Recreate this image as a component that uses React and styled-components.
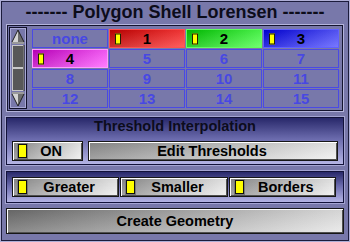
import React from 'react';
import styled, { createGlobalStyle } from 'styled-components';

const GlobalStyle = createGlobalStyle`
  html, body {
    margin: 0;
    padding: 0;
    background: #7878aa;
  }
  * {
    box-sizing: border-box;
  }
`;

const cells = [
  { label: 'none' },
  { label: '1', color: ['#c00000', '#ff3a3a'], edge: '#ff5050' },
  { label: '2', color: ['#00c000', '#50ff50'], edge: '#60ff60' },
  { label: '3', color: ['#0000d8', '#5a5aff'], edge: '#6060ff' },
  { label: '4', color: ['#c000c0', '#ff60ff'], edge: '#ff9cff' },
  { label: '5' },
  { label: '6' },
  { label: '7' },
  { label: '8' },
  { label: '9' },
  { label: '10' },
  { label: '11' },
  { label: '12' },
  { label: '13' },
  { label: '14' },
  { label: '15' }
];

const ScrollArrow = ({ down }) => (
  <g transform={down ? 'translate(0 80) scale(1 -1)' : undefined}>
    <polygon points="2,14 8,2 8,14" fill="#d4d4d4" />
    <polygon points="8,2 14,14 8,14" fill="#6c6c6c" />
    <polyline points="2,14 8,2 14,14" fill="none" stroke="#202020" strokeWidth="1" />
    <rect x="2" y="14" width="12" height="2" fill="#9a9a9a" />
  </g>
);

const ScrollGlyph = () => (
  <svg width="16" height="80" viewBox="0 0 16 80">
    <ScrollArrow />
    <rect x="2.5" y="17.5" width="11" height="22" fill="#585858" stroke="#c8c8c8" />
    <rect x="2.5" y="40.5" width="11" height="22" fill="#585858" stroke="#c8c8c8" />
    <line x1="14" y1="17" x2="14" y2="63" stroke="#202020" />
    <ScrollArrow down />
  </svg>
);

const App = () => (
  <>
    <GlobalStyle />
    <Window>
      <Title>------- Polygon Shell Lorensen -------</Title>

      <ListPanel>
        <Scrollbar>
          <ScrollGlyph />
        </Scrollbar>
        <CellGrid>
          {cells.map(cell => (
            <Cell key={cell.label} color={cell.color} edge={cell.edge}>
              {cell.color && <CellMark />}
              {cell.label}
            </Cell>
          ))}
        </CellGrid>
      </ListPanel>

      <ShadedPanel>
        <PanelTitle>Threshold Interpolation</PanelTitle>
        <ButtonRow columns="71px 1fr" gap="5px">
          <Button>
            <Mark />
            <Label>ON</Label>
          </Button>
          <Button>
            <Label>Edit Thresholds</Label>
          </Button>
        </ButtonRow>
      </ShadedPanel>

      <ShadedPanel compact>
        <ButtonRow columns="repeat(3, 1fr)" gap="1px">
          <Button>
            <Mark />
            <Label>Greater</Label>
          </Button>
          <Button>
            <Mark />
            <Label>Smaller</Label>
          </Button>
          <Button>
            <Mark />
            <Label>Borders</Label>
          </Button>
        </ButtonRow>
      </ShadedPanel>

      <BigButton>Create Geometry</BigButton>
    </Window>
  </>
);

export default App;

const Window = styled.div`
  width: 350px;
  height: 242px;
  padding: 0 5px;
  display: flex;
  flex-direction: column;

  background: #7878aa;
  border: 1px solid #aeaed6;
  box-shadow: inset 0 0 0 1px #1c1c3c;

  font-family: 'Liberation Sans', Arial, sans-serif;
  font-weight: bold;
`;

const Title = styled.div`
  height: 23px;
  line-height: 23px;
  text-align: center;
  font-size: 18px;
  color: #0c0c1a;
  white-space: nowrap;
`;

const ListPanel = styled.div`
  display: flex;
  gap: 5px;
  height: 88px;
  padding: 2px;

  border: 1px solid #b4b4dc;
  box-shadow: inset 0 0 0 1px #14142e;
`;

const Scrollbar = styled.div`
  width: 18px;
  height: 82px;
  border: 1px solid #10102a;
  box-shadow: inset 0 0 0 1px #a8a8d4;
  line-height: 0;
`;

const CellGrid = styled.div`
  display: grid;
  grid-template-columns: repeat(4, 76px);
  grid-auto-rows: 19px;
  gap: 1px;
  margin-top: 2px;
`;

const Cell = styled.div`
  position: relative;
  display: flex;
  align-items: center;
  justify-content: center;

  border: 1px solid ${({ edge }) => edge || '#4a4ae4'};
  background: ${({ color }) =>
    color
      ? `linear-gradient(to bottom, rgba(0,0,0,0.06), rgba(255,255,255,0.18)), linear-gradient(100deg, ${color[0]}, ${color[1]})`
      : 'transparent'};

  font-size: 15px;
  color: ${({ color }) => (color ? '#000000' : '#4848e2')};
`;

const CellMark = styled.span`
  position: absolute;
  left: 5px;
  top: 50%;
  transform: translateY(-50%);
  width: 6px;
  height: 11px;
  background: #ffff00;
  border: 1px solid #202000;
`;

const ShadedPanel = styled.div`
  display: flex;
  flex-direction: column;
  margin-top: ${({ compact }) => (compact ? '6px' : '5px')};
  padding: ${({ compact }) => (compact ? '5px 7px 5px 5px' : '0 5px 3px')};

  border: 1px solid #12123a;
  box-shadow: 0 0 0 1px #a4a4d2;
  background: linear-gradient(to bottom, #28286a 0%, #6a6aac 45%, #b4b4e4 100%);
`;

const PanelTitle = styled.div`
  height: 17px;
  line-height: 17px;
  margin-bottom: 6px;
  text-align: center;
  font-size: 14.5px;
  color: #0c0c1c;
`;

const ButtonRow = styled.div`
  display: grid;
  grid-template-columns: ${({ columns }) => columns};
  gap: ${({ gap }) => gap};
`;

const Button = styled.div`
  display: flex;
  align-items: center;
  height: 20px;
  padding: 0 7px 0 5px;

  border: 1px solid #161616;
  box-shadow: inset 1px 1px 0 #ffffff, inset -1px -1px 0 #505050;
  background: linear-gradient(to bottom, rgba(0, 0, 0, 0.08), rgba(255, 255, 255, 0.2)),
    linear-gradient(to right, #8c8c8c, #f0f0f0);

  font-size: 14.5px;
  color: #000000;
`;

const Mark = styled.span`
  flex: none;
  width: 9px;
  height: 14px;
  background: #ffff00;
  border: 1px solid #101010;
  box-shadow: 0 0 0 1px #7a7a7a;
`;

const Label = styled.span`
  flex: 1;
  text-align: center;
  white-space: nowrap;
`;

const BigButton = styled.div`
  height: 26px;
  margin-top: 5px;
  display: flex;
  align-items: center;
  justify-content: center;

  border: 1px solid #161616;
  box-shadow: inset 1px 1px 0 #ffffff, inset -1px -1px 0 #505050;
  background: linear-gradient(to bottom, rgba(0, 0, 0, 0.08), rgba(255, 255, 255, 0.22)),
    linear-gradient(to right, #6c6c6c, #e6e6e6);

  font-size: 14.5px;
  color: #000000;
`;
